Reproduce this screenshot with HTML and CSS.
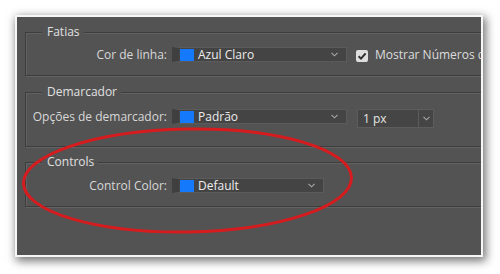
FILE: index.html
```html
<!DOCTYPE html>
<html lang="pt">
<head>
<meta charset="utf-8">
<title>Preferências</title>
<link rel="stylesheet" href="styles.css">
</head>
<body>
<div class="panel">
  <div class="group g1">
    <div class="legend">Fatias</div>
    <div class="row r1">
      <span class="label">Cor de linha:</span>
      <div class="select wide">
        <span class="swatch"></span><span class="value">Azul Claro</span>
        <svg class="chev" width="7" height="5" viewBox="0 0 7 5"><polyline points="0.5,0.8 3.5,3.8 6.5,0.8" fill="none" stroke="#a8a8a8" stroke-width="1.1"/></svg>
      </div>
      <span class="check"><svg width="12" height="12" viewBox="0 0 12 12"><polyline points="2.6,6.2 5,8.6 9.6,3.4" fill="none" stroke="#2e2e2e" stroke-width="2"/></svg></span>
      <span class="check-label">Mostrar Números de Fatias</span>
    </div>
  </div>
  <div class="group g2">
    <div class="legend">Demarcador</div>
    <div class="row r2">
      <span class="label">Opções de demarcador:</span>
      <div class="select wide">
        <span class="swatch"></span><span class="value">Padrão</span>
        <svg class="chev" width="7" height="5" viewBox="0 0 7 5"><polyline points="0.5,0.8 3.5,3.8 6.5,0.8" fill="none" stroke="#a8a8a8" stroke-width="1.1"/></svg>
      </div>
      <div class="combo">
        <span class="combo-value">1 px</span>
        <span class="combo-btn"><svg width="7" height="5" viewBox="0 0 7 5"><polyline points="0.5,0.8 3.5,3.8 6.5,0.8" fill="none" stroke="#a8a8a8" stroke-width="1.1"/></svg></span>
      </div>
    </div>
  </div>
  <div class="group g3">
    <div class="legend">Controls</div>
    <div class="row r3">
      <span class="label">Control Color:</span>
      <div class="select narrow">
        <span class="swatch"></span><span class="value">Default</span>
        <svg class="chev" width="7" height="5" viewBox="0 0 7 5"><polyline points="0.5,0.8 3.5,3.8 6.5,0.8" fill="none" stroke="#a8a8a8" stroke-width="1.1"/></svg>
      </div>
    </div>
  </div>
</div>
<svg class="annot" width="500" height="274" viewBox="0 0 500 274">
  <ellipse cx="187.5" cy="180.5" rx="164" ry="51.5" transform="rotate(-1 187.5 180.5)" fill="none" stroke="#d61c1f" stroke-width="3"/>
</svg>
</body>
</html>
```

FILE: styles.css
```css
* { box-sizing: border-box; }

html, body {
  margin: 0;
  padding: 0;
  background: #ffffff;
}

body {
  position: relative;
  width: 500px;
  height: 274px;
  overflow: hidden;
  font-family: "Open Sans", "Liberation Sans", sans-serif;
  font-size: 12px;
  color: #dadada;
}

.panel {
  margin: 15px 0 0 15px;
  width: 468px;
  height: 242px;
  border: 2px solid #f6f6f6;
  background: #535353;
  box-shadow: 2px 3px 9px 1px rgba(0, 0, 0, 0.55);
  padding: 0 0 0 8px;
  overflow: hidden;
  display: flex;
  flex-direction: column;
}

.group {
  width: 480px;
  flex-shrink: 0;
  border: 1px solid #3d3d3d;
  box-shadow: inset 1px 1px 0 #626262, 1px 1px 0 #626262;
}

.g1 { margin-top: 15px; padding-bottom: 13px; }
.g2 { margin-top: 16px; padding-bottom: 18px; }
.g3 { margin-top: 15px; padding-bottom: 13px; }

.legend {
  width: max-content;
  margin: -8px 0 0 16px;
  padding: 0 4px 0 5px;
  height: 14px;
  line-height: 14px;
  background: #535353;
  color: #e0e0e0;
}

.row {
  display: flex;
  align-items: flex-start;
  white-space: nowrap;
}

.r1 { margin-top: 8px; }
.r2 { margin-top: 10px; }
.r3 { margin-top: 9px; }

.label {
  flex: 0 0 141px;
  text-align: right;
  line-height: 15px;
  margin-right: 5px;
  color: #d8d8d8;
}

.select {
  flex-shrink: 0;
  height: 15px;
  display: flex;
  align-items: center;
  background: #444444;
  border: 1px solid #5b5b5b;
  border-left: 7px solid #3f3f3f;
  padding: 0 8px 0 1px;
}

.select.wide { width: 175px; }
.select.narrow { width: 152px; }

.swatch {
  width: 14px;
  height: 12px;
  background: #1479fb;
  flex-shrink: 0;
}

.value {
  margin-left: 4px;
  line-height: 13px;
  color: #ececec;
  flex: 1;
}

.chev { flex-shrink: 0; }

.check {
  flex-shrink: 0;
  width: 12px;
  height: 12px;
  margin: 3px 0 0 9px;
  background: #dedede;
  border-radius: 2px;
  display: flex;
}

.check-label {
  margin-left: 7px;
  line-height: 15px;
  color: #dcdcdc;
}

.combo {
  flex-shrink: 0;
  margin-left: 10px;
  width: 77px;
  height: 19px;
  display: flex;
  background: #454545;
  border: 1px solid #5c5c5c;
}

.combo-value {
  flex: 1;
  padding-left: 5px;
  line-height: 17px;
  color: #e4e4e4;
}

.combo-btn {
  width: 15px;
  border-left: 1px solid #5c5c5c;
  display: flex;
  align-items: center;
  justify-content: center;
}

.annot {
  position: absolute;
  left: 0;
  top: 0;
  pointer-events: none;
}
```
